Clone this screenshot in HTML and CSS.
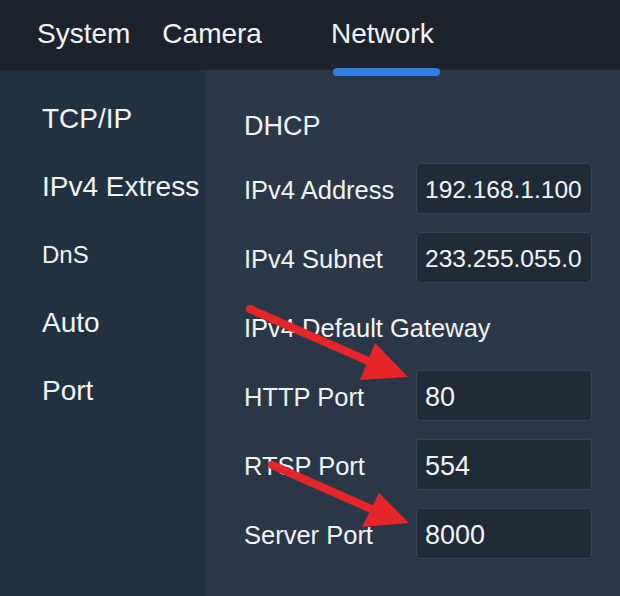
FILE: index.html
```html
<!DOCTYPE html>
<html>
<head>
<meta charset="utf-8">
<link rel="stylesheet" href="styles.css">
</head>
<body>
<div class="app">
  <header class="tabs">
    <div class="tab">System</div>
    <div class="tab">Camera</div>
    <div class="tab tab-active">Network</div>
  </header>
  <div class="body">
    <nav class="side">
      <div class="side-item">TCP/IP</div>
      <div class="side-item">IPv4 Extress</div>
      <div class="side-item side-small">DnS</div>
      <div class="side-item">Auto</div>
      <div class="side-item">Port</div>
    </nav>
    <main class="main">
      <div class="title">DHCP</div>
      <div class="row"><div class="label">IPv4 Address</div><div class="field">192.168.1.100</div></div>
      <div class="row"><div class="label">IPv4 Subnet</div><div class="field">233.255.055.0</div></div>
      <div class="row"><div class="label label-wide">IPv4 Default Gateway</div></div>
      <div class="row"><div class="label">HTTP Port</div><div class="field field-big">80</div></div>
      <div class="row"><div class="label">RTSP Port</div><div class="field field-big">554</div></div>
      <div class="row"><div class="label">Server Port</div><div class="field field-big">8000</div></div>
    </main>
  </div>
  <svg class="arrows" width="620" height="596" viewBox="0 0 620 596">
    <line x1="250" y1="309" x2="375" y2="364" stroke="#e6252a" stroke-width="8" stroke-linecap="round"/>
    <polygon points="408,377 375,343 360,380" fill="#e6252a"/>
    <line x1="272" y1="465" x2="378" y2="512" stroke="#e6252a" stroke-width="8" stroke-linecap="round"/>
    <polygon points="409,523 379,493 362,527" fill="#e6252a"/>
  </svg>
</div>
</body>
</html>
```

FILE: styles.css
```css
* { box-sizing: border-box; }
html, body { margin: 0; padding: 0; }
body {
  width: 620px;
  height: 596px;
  overflow: hidden;
  background: #2a3746;
  font-family: "Liberation Sans", Arial, sans-serif;
  color: #f2f4f6;
}
.app {
  position: relative;
  width: 620px;
  height: 596px;
  display: flex;
  flex-direction: column;
}
.tabs {
  height: 70px;
  flex: none;
  background: #1c232d;
  display: flex;
  align-items: center;
  padding-left: 37px;
  gap: 32px;
  position: relative;
  z-index: 2;
}
.tab {
  font-size: 28px;
  line-height: 30px;
  padding-bottom: 2px;
  position: relative;
}
.tab-active {
  margin-left: 37px;
}
.tab-active::after {
  content: "";
  position: absolute;
  left: 2px;
  width: 107px;
  bottom: -25px;
  height: 8px;
  border-radius: 4px;
  background: #2f7fe3;
}
.body {
  flex: 1;
  display: flex;
}
.side {
  width: 207px;
  flex: none;
  background: #22313f;
  border-right: 1px solid #26384b;
  padding-top: 15px;
  padding-left: 42px;
}
.side-item {
  height: 68px;
  line-height: 68px;
  font-size: 28px;
  white-space: nowrap;
}
.side-small {
  font-size: 24px;
}
.main {
  flex: 1;
  background: linear-gradient(180deg, #2b3848 0%, #2a3746 100%);
  padding-top: 31px;
  padding-left: 37px;
  display: flex;
  flex-direction: column;
  gap: 18px;
}
.title {
  height: 50px;
  line-height: 50px;
  font-size: 27px;
  margin-bottom: -6px;
}
.row {
  height: 51px;
  display: flex;
  align-items: center;
}
.label {
  width: 172px;
  font-size: 25.5px;
  white-space: nowrap;
  flex: none;
  padding-top: 3px;
}
.label-wide {
  width: auto;
}
.field {
  width: 176px;
  height: 51px;
  background: #202b38;
  border: 1px solid #364353;
  border-radius: 4px;
  padding-left: 8px;
  padding-top: 3px;
  display: flex;
  align-items: center;
  font-size: 24.5px;
  white-space: nowrap;
  overflow: hidden;
}
.field-big {
  font-size: 27px;
}
.arrows {
  position: absolute;
  left: 0;
  top: 0;
  z-index: 3;
  pointer-events: none;
}
```
